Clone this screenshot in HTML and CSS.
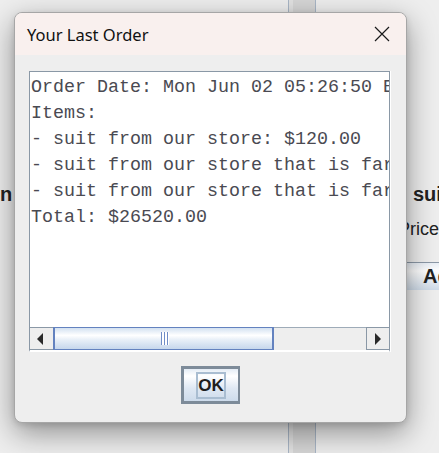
FILE: index.html
```html
<!DOCTYPE html>
<html>
<head>
<meta charset="utf-8">
<link rel="stylesheet" href="styles.css">
</head>
<body>
<div class="app">
  <div class="col-left">
    <div class="card-name">n Shirt</div>
  </div>
  <div class="vstrip"><div class="vstrip-inner"></div></div>
  <div class="col-right">
    <div class="card-name right-name">suit</div>
    <div class="card-price">Price: $120.00</div>
    <div class="card-btn">Add to Cart</div>
  </div>
</div>

<div class="dialog">
  <div class="titlebar">
    <span class="title">Your Last Order</span>
    <svg class="close" width="16" height="16" viewBox="0 0 16 16">
      <path d="M1 1 L15 15 M15 1 L1 15" stroke="#1a1a1a" stroke-width="1.2" fill="none"/>
    </svg>
  </div>
  <div class="body">
    <div class="pane">
      <pre class="viewport">Order Date: Mon Jun 02 05:26:50 EDT 2025
Items:
- suit from our store: $120.00
- suit from our store that is far too expensive: $13200.00
- suit from our store that is far too expensive: $13200.00
Total: $26520.00</pre>
      <div class="hbar">
        <div class="arrow-btn left-btn"><span class="tri tri-left"></span></div>
        <div class="thumb"><span class="grip"></span></div>
        <div class="track"></div>
        <div class="arrow-btn right-btn"><span class="tri tri-right"></span></div>
      </div>
    </div>
    <div class="ok-btn"><span class="focus">OK</span></div>
  </div>
</div>
</body>
</html>
```

FILE: styles.css
```css
html, body {
  margin: 0;
  padding: 0;
}
body {
  width: 439px;
  height: 453px;
  overflow: hidden;
  background: #eeeeee;
  position: relative;
  font-family: "Liberation Sans", Arial, sans-serif;
}
.app {
  display: grid;
  grid-template-columns: 288px 28px 1fr;
  height: 453px;
}
.col-left {
  padding-top: 182px;
  overflow: hidden;
}
.card-name {
  font-weight: bold;
  font-size: 20px;
  line-height: 24px;
  color: #222;
  white-space: nowrap;
}
.vstrip {
  border-left: 1px solid #a9b6c6;
  border-right: 1px solid #a9b6c6;
  background: #d6d6d6;
  display: flex;
}
.vstrip-inner {
  width: 4px;
  background: #e2e2e2;
}
.col-right {
  padding-top: 182px;
  padding-left: 79px;
  display: flex;
  flex-direction: column;
  overflow: hidden;
}
.right-name {
  padding-left: 18px;
}
.card-price {
  margin-top: 12px;
  padding-left: 3px;
  font-size: 18px;
  line-height: 22px;
  color: #222;
  white-space: nowrap;
}
.card-btn {
  margin-top: 22px;
  height: 28px;
  box-sizing: border-box;
  border-top: 1px solid #8d9aa8;
  background: linear-gradient(#e9eff6, #ffffff 30%, #cfdbe8);
  font-weight: bold;
  font-size: 20px;
  line-height: 26px;
  padding-left: 28px;
  color: #222;
  white-space: nowrap;
  width: 140px;
}

.dialog {
  position: absolute;
  left: 14px;
  top: 12px;
  width: 393px;
  height: 411px;
  box-sizing: border-box;
  border: 1px solid #a6a6a6;
  border-radius: 8px;
  overflow: hidden;
  background: #eeeeee;
  box-shadow: 0 10px 30px rgba(0, 0, 0, 0.4), 0 2px 6px rgba(0, 0, 0, 0.12);
  display: flex;
  flex-direction: column;
}
.titlebar {
  height: 42px;
  flex: none;
  background: #f9f0ee;
  display: flex;
  align-items: center;
  justify-content: space-between;
  padding: 0 16px 0 12px;
}
.title {
  font-family: "Noto Sans", "Open Sans", sans-serif;
  font-size: 16.5px;
  color: #111;
}
.close {
  display: block;
}
.body {
  flex: 1;
  display: flex;
  flex-direction: column;
  align-items: flex-start;
  padding: 16px 15px 0 14px;
}
.pane {
  width: 361px;
  height: 281px;
  box-sizing: border-box;
  border-top: 1px solid #8a98a6;
  border-left: 1px solid #8a98a6;
  border-right: 1px solid #8a98a6;
  border-bottom: 2px solid #ffffff;
  box-shadow: 1px 0 0 #ffffff;
  display: flex;
  flex-direction: column;
  background: #ffffff;
}
.viewport {
  margin: 0;
  height: 255px;
  flex: none;
  box-sizing: border-box;
  padding: 3px 0 0 1px;
  overflow: hidden;
  white-space: pre;
  font-family: "Liberation Mono", "Courier New", monospace;
  font-size: 18.33px;
  line-height: 26px;
  color: #4a4a52;
  background: #ffffff;
}
.hbar {
  height: 23px;
  flex: none;
  display: flex;
}
.arrow-btn {
  width: 23px;
  box-sizing: border-box;
  background: #eeeeee;
  border-top: 1px solid #8a98a6;
  border-bottom: 1px solid #8a98a6;
  display: flex;
  align-items: center;
  justify-content: center;
}
.right-btn {
  border-left: 1px solid #8a98a6;
}
.tri {
  width: 0;
  height: 0;
  border-top: 6px solid transparent;
  border-bottom: 6px solid transparent;
}
.tri-left {
  border-right: 6px solid #2a2a2a;
  margin-right: 4px;
}
.tri-right {
  border-left: 6px solid #2a2a2a;
}
.thumb {
  width: 221px;
  box-sizing: border-box;
  border: 1px solid #6382bf;
  border-left-width: 2px;
  border-right-width: 2px;
  background: linear-gradient(#d3e1f1, #ffffff 35%, #e9f0f8 55%, #c6d7ec);
  display: flex;
  align-items: center;
  justify-content: center;
}
.grip {
  width: 8px;
  height: 13px;
  margin-left: 2px;
  background: repeating-linear-gradient(90deg, #6f8dc7 0 1px, #ffffff 1px 3px);
}
.track {
  width: 92px;
  box-sizing: border-box;
  background: #eeeeee;
  border-top: 1px solid #9eabb8;
}
.ok-btn {
  align-self: center;
  margin-top: 14px;
  width: 59px;
  height: 38px;
  box-sizing: border-box;
  border: 3px solid #7d8b99;
  border-right-width: 2px;
  background: linear-gradient(#e4ecf5, #ffffff 22%, #dfe8f3 60%, #cddbeb);
  display: flex;
  align-items: center;
  justify-content: center;
}
.focus {
  width: 30px;
  height: 27px;
  box-sizing: border-box;
  border: 2px solid #a9bdd1;
  font-weight: bold;
  font-size: 17px;
  line-height: 23px;
  text-align: center;
  color: #1e1e1e;
  margin-left: 1px;
}
```
